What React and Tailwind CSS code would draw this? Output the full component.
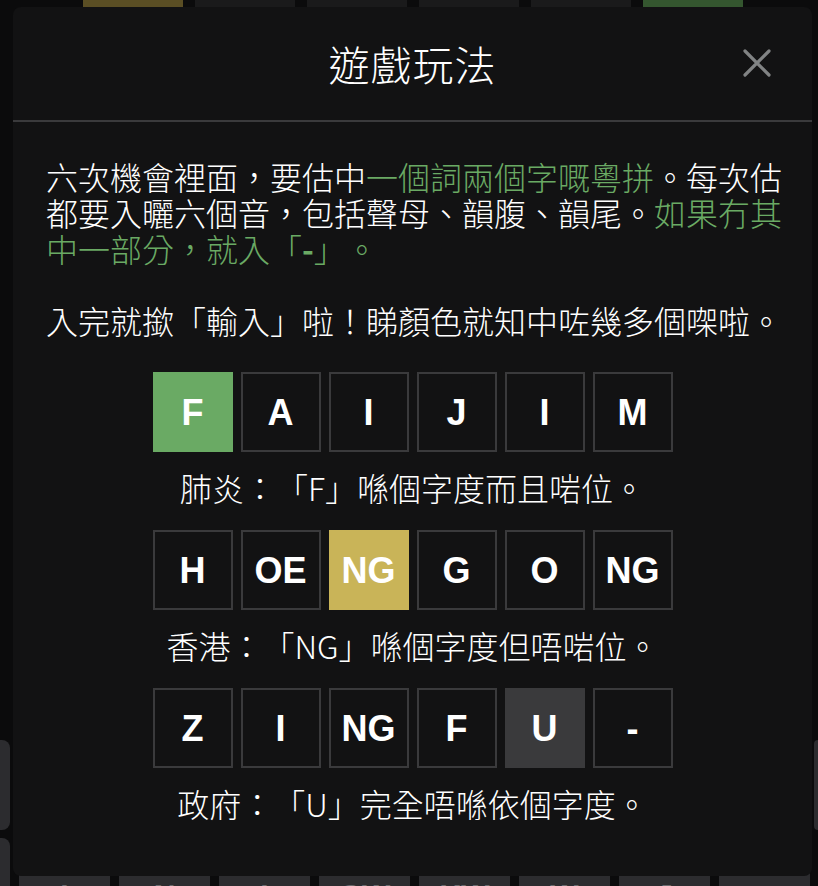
const CJK = { fontFamily: '"Noto Sans CJK TC", "Noto Sans", sans-serif' }
const TILE_FONT = { fontFamily: '"Liberation Sans", Arial, sans-serif' }

const TOP_TILES = [
  { letter: 'U', color: 'bg-[#5a4e24]' },
  { letter: 'O', color: 'bg-[#1a1a1b]' },
  { letter: 'K', color: 'bg-[#1a1a1b]' },
  { letter: 'S', color: 'bg-[#1a1a1b]' },
  { letter: 'AA', color: 'bg-[#1a1a1b]' },
  { letter: 'NG', color: 'bg-[#34562f]' },
]

const KEYS = ['I', 'N', 'I', 'GW', 'KW', 'W', 'J', '', '']

const EXAMPLES = [
  {
    tiles: [
      { l: 'F', s: 'correct' },
      { l: 'A' },
      { l: 'I' },
      { l: 'J' },
      { l: 'I' },
      { l: 'M' },
    ],
    caption: '肺炎：「F」喺個字度而且啱位。',
  },
  {
    tiles: [
      { l: 'H' },
      { l: 'OE' },
      { l: 'NG', s: 'present' },
      { l: 'G' },
      { l: 'O' },
      { l: 'NG' },
    ],
    caption: '香港：「NG」喺個字度但唔啱位。',
  },
  {
    tiles: [
      { l: 'Z' },
      { l: 'I' },
      { l: 'NG' },
      { l: 'F' },
      { l: 'U', s: 'absent' },
      { l: '-' },
    ],
    caption: '政府：「U」完全唔喺依個字度。',
  },
]

function Tile({ letter, state }) {
  let cls = 'border-2 border-[#3a3a3c] bg-[#121213]'
  if (state === 'correct') cls = 'bg-[#6aaa64]'
  if (state === 'present') cls = 'bg-[#c9b458]'
  if (state === 'absent') cls = 'bg-[#3a3a3c]'
  return (
    <div
      className={`flex h-[80px] w-[80px] items-center justify-center pt-[2px] text-[36px] font-bold leading-none text-white ${cls}`}
      style={TILE_FONT}
    >
      {letter}
    </div>
  )
}

function Background() {
  return (
    <div className="flex h-full flex-col">
      <div className="flex h-[7px] shrink-0 items-end gap-[12px] overflow-hidden pl-[83px]">
        {TOP_TILES.map((t, i) => (
          <div
            key={i}
            className={`flex h-[100px] w-[100px] shrink-0 items-end justify-center pb-[2px] text-[48px] font-bold leading-none text-[#5f5f61] ${t.color}`}
            style={TILE_FONT}
          >
            {t.letter}
          </div>
        ))}
      </div>
      <div className="h-[733px] shrink-0" />
      <div className="flex h-[90px] shrink-0 justify-between">
        <div className="w-[10px] rounded-r-[8px] bg-[#2c2c2f]" />
        <div className="w-[4px] rounded-l-[8px] bg-[#2c2c2f]" />
      </div>
      <div className="mt-[8px] flex shrink-0 gap-[8px]">
        <div className="h-[90px] w-[10px] shrink-0 rounded-r-[8px] bg-[#2c2c2f]" />
        {KEYS.map((k, i) => (
          <div
            key={i}
            className="ml-[1px] flex h-[90px] w-[91px] shrink-0 items-center justify-center rounded-[8px] bg-[#2c2c2f] pt-[22px] text-[30px] font-bold text-[#6b6b6e]"
            style={TILE_FONT}
          >
            {k}
          </div>
        ))}
      </div>
    </div>
  )
}

export default function App() {
  return (
    <div className="relative h-[886px] w-[818px] overflow-hidden bg-[#0b0b0c]">
      <Background />

      <div
        className="absolute left-[13px] top-[7px] flex h-[869px] w-[799px] flex-col rounded-[8px] bg-[#121213] text-white [text-spacing-trim:space-all]"
        style={CJK}
      >
        <div className="relative flex h-[115px] shrink-0 items-center justify-center border-b-2 border-[#3a3a3c]">
          <h1 className="text-[41px] font-light leading-none tracking-[1px]">遊戲玩法</h1>
          <button type="button" className="absolute right-[40px] top-[41px] h-[30px] w-[30px]">
            <svg viewBox="0 0 30 30" className="h-[30px] w-[30px]">
              <path d="M3 3 L27 27 M27 3 L3 27" stroke="#818384" strokeWidth="3.2" strokeLinecap="round" />
            </svg>
          </button>
        </div>

        <div className="pl-[33px] pr-[27px] pt-[36px] text-[32px] font-light leading-[36px]">
          <p>
            六次機會裡面，要估中<span className="text-[#6aaa64]">一個詞兩個字嘅粵拼</span>
            。每次估都要入曬六個音，包括聲母、韻腹、韻尾。
            <span className="text-[#6aaa64]">
              如果冇其中一部分，就入「<span className="font-bold">-</span>」。
            </span>
          </p>
          <p className="mt-[36px]">入完就撳「輸入」啦！睇顏色就知中咗幾多個㗎啦。</p>
        </div>

        <div className="mt-[34px] flex flex-col items-center">
          {EXAMPLES.map((ex, i) => (
            <div key={i} className="flex flex-col items-center">
              <div className="flex gap-[8px]">
                {ex.tiles.map((t, j) => (
                  <Tile key={j} letter={t.l} state={t.s} />
                ))}
              </div>
              <p className="mb-[25px] mt-[17px] text-[32px] font-light leading-[36px]">{ex.caption}</p>
            </div>
          ))}
        </div>
      </div>
    </div>
  )
}
